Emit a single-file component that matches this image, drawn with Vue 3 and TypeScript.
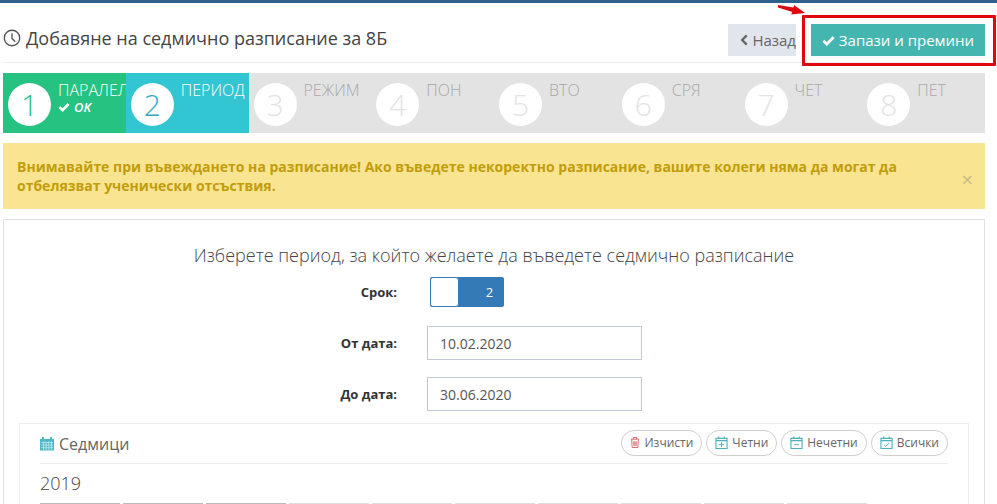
<script setup lang="ts">
interface Step { n: number; label: string; state: string; ok?: boolean }
const steps: Step[] = [
  { n: 1, label: 'ПАРАЛЕЛКА', state: 'done', ok: true },
  { n: 2, label: 'ПЕРИОД', state: 'active' },
  { n: 3, label: 'РЕЖИМ', state: 'todo' },
  { n: 4, label: 'ПОН', state: 'todo' },
  { n: 5, label: 'ВТО', state: 'todo' },
  { n: 6, label: 'СРЯ', state: 'todo' },
  { n: 7, label: 'ЧЕТ', state: 'todo' },
  { n: 8, label: 'ПЕТ', state: 'todo' },
]
const tiles = [0, 1, 2, 3, 4, 5, 6, 7, 8, 9]
</script>

<template>
  <div class="page">
    <div class="topbar"></div>
    <div class="wrap">
      <header class="head">
        <h1 class="title">
          <svg class="clock" viewBox="0 0 20 20" width="18" height="18">
            <circle cx="10" cy="10" r="8.6" fill="none" stroke="#555" stroke-width="1.5" />
            <path d="M10 4.6V10.4L13.6 14.2" fill="none" stroke="#555" stroke-width="1.5" />
          </svg>
          <span>Добавяне на седмично разписание за 8Б</span>
        </h1>
        <div class="actions">
          <button class="btn back">
            <svg viewBox="0 0 10 14" width="9" height="12"><path d="M8 1.5L2.6 7L8 12.5" fill="none" stroke="#666" stroke-width="2.8" /></svg>
            Назад
          </button>
          <button class="btn save">
            <svg viewBox="0 0 14 12" width="13" height="11"><path d="M1.5 6.2L5.2 9.8L12.5 2.4" fill="none" stroke="#fff" stroke-width="3" /></svg>
            Запази и премини
          </button>
          <div class="redbox"></div>
          <svg class="arrow" viewBox="0 0 28 10" width="28" height="10">
            <path d="M0 0L15.5 2.6L16 0L27 8L13 9.6L14.4 7L0 2.6Z" fill="#e2070f" />
          </svg>
        </div>
      </header>

      <div class="steps">
        <div v-for="s in steps" :key="s.n" class="step" :class="s.state">
          <div class="num">{{ s.n }}</div>
          <div class="info">
            <div class="label">{{ s.label }}</div>
            <div v-if="s.ok" class="ok">
              <svg viewBox="0 0 14 12" width="12" height="10"><path d="M1.5 6.2L5.2 9.8L12.5 2.4" fill="none" stroke="#fff" stroke-width="3" /></svg>
              <em>OK</em>
            </div>
          </div>
        </div>
      </div>

      <div class="alert">
        <p>Внимавайте при въвеждането на разписание! Ако въведете некоректно разписание, вашите колеги няма да могат да отбелязват ученически отсъствия.</p>
        <span class="close">×</span>
      </div>

      <section class="panel">
        <h2 class="lead">Изберете период, за който желаете да въведете седмично разписание</h2>
        <div class="row term">
          <label>Срок:</label>
          <div class="switch"><span class="handle"></span><span class="on">2</span></div>
        </div>
        <div class="row date">
          <label>От дата:</label>
          <div class="input">10.02.2020</div>
        </div>
        <div class="row date">
          <label>До дата:</label>
          <div class="input">30.06.2020</div>
        </div>

        <div class="weeks">
          <div class="weeks-head">
            <div class="weeks-title">
              <svg viewBox="0 0 14 14" width="14" height="15">
                <path d="M0 2.5H14V14H0Z" fill="#4eb9c6" />
                <path d="M3 .5V3.5M11 .5V3.5" stroke="#4eb9c6" stroke-width="2" />
                <path d="M1 6H13M1 8.6H13M1 11.2H13M3.6 5V13.4M6.2 5V13.4M8.8 5V13.4M11.4 5V13.4" stroke="#cfeef2" stroke-width=".7" />
              </svg>
              Седмици
            </div>
            <div class="pills">
              <button class="pill">
                <svg viewBox="0 0 12 14" width="10" height="13"><path d="M1 3H11M4 3V1H8V3M2 3L2.6 13H9.4L10 3M4.6 5.5V11M6 5.5V11M7.4 5.5V11" fill="none" stroke="#dc6b74" stroke-width="1.2" /></svg>
                Изчисти
              </button>
              <button class="pill">
                <svg viewBox="0 0 14 14" width="13" height="13"><path d="M1 2.5H13V13.5H1ZM1 5H13M4 .5V3M10 .5V3" fill="none" stroke="#4eb0bd" stroke-width="1.2" /><path d="M7 6.6V12M4.3 9.3H9.7" stroke="#4eb0bd" /></svg>
                Четни
              </button>
              <button class="pill">
                <svg viewBox="0 0 14 14" width="13" height="13"><path d="M1 2.5H13V13.5H1ZM1 5H13M4 .5V3M10 .5V3" fill="none" stroke="#4eb0bd" stroke-width="1.2" /><path d="M4.3 9.3H9.7" stroke="#4eb0bd" /></svg>
                Нечетни
              </button>
              <button class="pill">
                <svg viewBox="0 0 14 14" width="13" height="13"><path d="M1 2.5H13V13.5H1ZM1 5H13M4 .5V3M10 .5V3" fill="none" stroke="#4eb0bd" stroke-width="1.2" /><path d="M4.3 9.3L6.3 11.2L9.8 7.4" fill="none" stroke="#4eb0bd" /></svg>
                Всички
              </button>
            </div>
          </div>
          <div class="year">2019</div>
          <div class="tiles">
            <span v-for="t in tiles" :key="t" class="tile" :class="{ dark: t < 3 }"></span>
          </div>
        </div>
      </section>
    </div>
  </div>
</template>

<style>
html, body { margin: 0; background: #fff; overflow: hidden; }
</style>

<style scoped>
.page { width: 997px; height: 504px; overflow: hidden; font-family: "Open Sans", sans-serif; color: #555; }
.topbar { height: 3px; background: #2f5f8c; }
.wrap { padding: 0 12px 0 3px; }
.head { display: flex; justify-content: space-between; align-items: center; height: 59px; border-bottom: 1px solid #eee; box-sizing: content-box; }
.title { display: flex; align-items: center; gap: 5px; margin: 11px 0 0; font-size: 18px; font-weight: 400; color: #444; }
.actions { position: relative; display: flex; gap: 15px; margin-top: 15px; }
.btn { display: flex; align-items: center; gap: 4px; height: 32px; border: 0; padding: 0; font: 400 15px "Open Sans", sans-serif; white-space: nowrap; }
.back { width: 68px; padding-left: 12px; background: #e1e5ec; color: #666; box-sizing: border-box; }
.save { width: 174px; justify-content: center; background: #45b6af; color: #fff; }
.redbox { position: absolute; left: 74px; top: -9px; width: 188px; height: 45px; border: 3px solid #e2070f; border-radius: 1px; }
.arrow { position: absolute; left: 50px; top: -19px; }
.steps { display: grid; grid-template-columns: repeat(8, 1fr); height: 60px; margin-top: 10px; background: #e3e3e3; }
.step { display: flex; gap: 7px; padding: 10px 0 0 5px; overflow: hidden; color: #a8a8a8; white-space: nowrap; min-width: 0; }
.step.done { background: #26c281; color: #fff; }
.step.active { background: #32c5d2; color: #fff; }
.num { flex: none; width: 43px; height: 43px; border-radius: 50%; background: #fff; display: flex; align-items: center; justify-content: center; font-size: 30px; font-weight: 300; color: #e3e3e3; }
.done .num { color: #26c281; }
.active .num { color: #32a8c0; }
.info { margin-top: -3px; }
.label { font-size: 16px; font-weight: 300; line-height: 21px; }
.ok { display: flex; align-items: center; gap: 4px; font-size: 13px; font-weight: 600; line-height: 14px; margin-top: -1px; }
.alert { position: relative; margin-top: 10px; height: 66px; box-sizing: border-box; background: #f9e491; padding: 14px 40px 0 14px; color: #c29d0b; }
.alert p { margin: 0; font-size: 14px; font-weight: 700; line-height: 19px; }
.close { position: absolute; right: 12px; top: 25px; font-size: 20px; line-height: 24px; color: #c7b982; }
.panel { margin-top: 10px; border: 1px solid #e0e0e0; border-bottom: 0; padding: 0 15px; height: 290px; box-sizing: border-box; }
.lead { margin: 24px 0 0; text-align: center; font-size: 18px; font-weight: 300; line-height: 22px; color: #444; }
.row { display: flex; align-items: center; }
.row label { width: 378px; flex: none; text-align: right; font-size: 13px; font-weight: 700; color: #333; box-sizing: border-box; }
.term { margin-top: 11px; height: 30px; }
.switch { display: flex; margin-left: 33px; width: 74px; height: 30px; background: #337ab7; box-sizing: border-box; border-radius: 2px; color: #fff; font-size: 13px; }
.handle { width: 29px; background: #fff; border: 1px solid #337ab7; border-radius: 3px; box-sizing: border-box; }
.on { flex: 1; display: flex; align-items: center; justify-content: center; padding-left: 16px; }
.date { margin-top: 19px; height: 34px; }
.date + .date { margin-top: 17px; }
.input { margin-left: 30px; box-sizing: border-box; width: 215px; height: 34px; border: 1px solid #c2cad8; padding-left: 12px; display: flex; align-items: center; font-size: 14px; color: #555; }
.weeks { margin-top: 12px; border: 1px solid #eee; padding: 0 20px; height: 100px; }
.weeks-head { display: flex; justify-content: space-between; align-items: center; height: 39px; border-bottom: 1px solid #eee; }
.weeks-title { display: flex; align-items: center; gap: 5px; font-size: 16px; color: #666; }
.pills { display: flex; gap: 4px; margin-top: -2px; }
.pill { display: flex; align-items: center; gap: 4px; height: 26px; padding: 0 8px; background: #fff; border: 1px solid #d0cfcf; border-radius: 13px; font: 400 12px "Open Sans", sans-serif; color: #666; box-sizing: border-box; }
.year { margin-top: 7px; font-size: 18px; font-weight: 300; line-height: 25px; color: #444; }
.tiles { display: flex; gap: 3px; margin-top: 7px; }
.tile { width: 80px; height: 2px; background: #ddd; }
.tile.dark { background: #bbb; }
</style>
